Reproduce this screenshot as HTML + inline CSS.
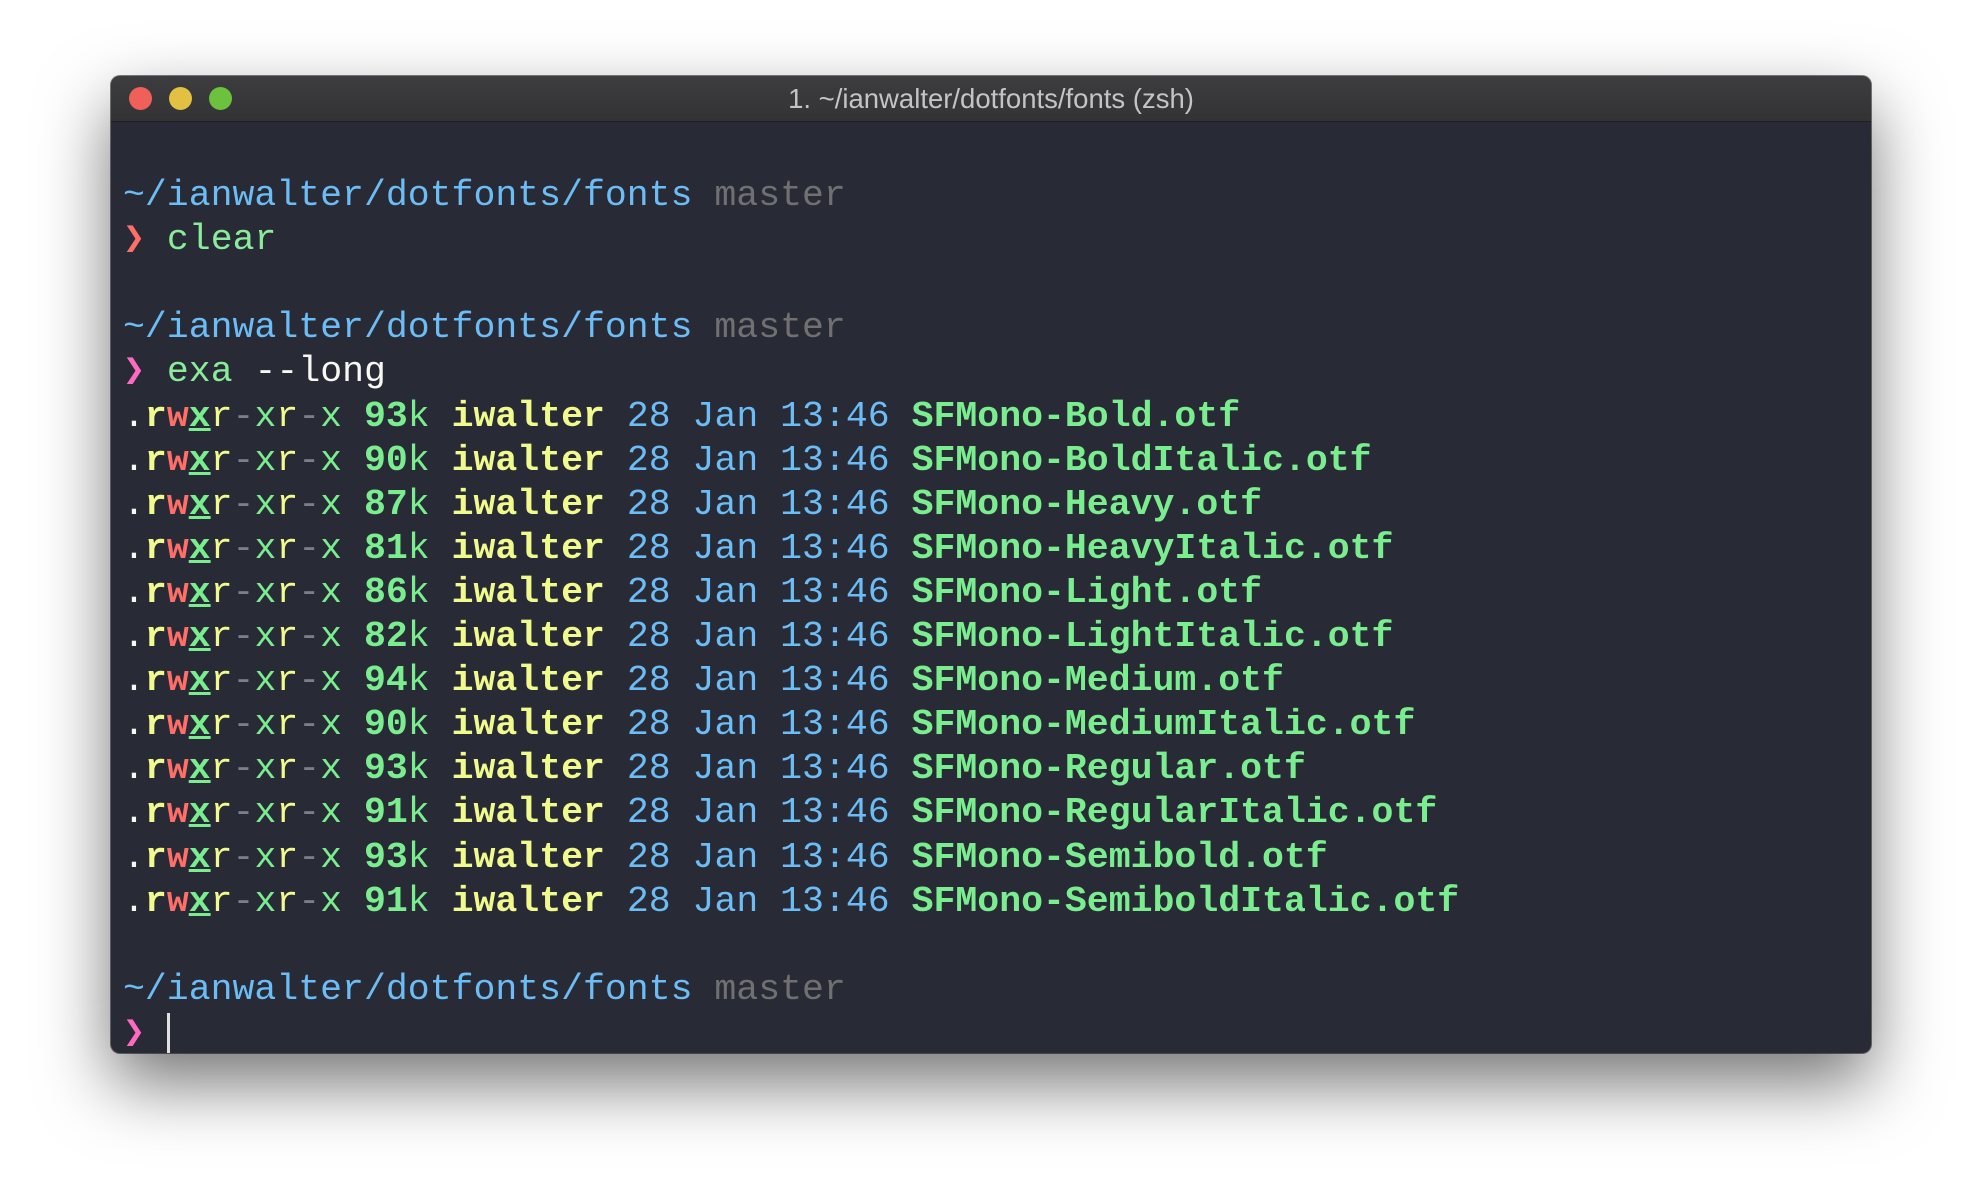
<!DOCTYPE html>
<html><head><meta charset="utf-8"><style>
html,body{margin:0;padding:0;width:1982px;height:1202px;background:#fff;overflow:hidden}
.win{position:absolute;left:111px;top:76px;width:1760px;height:977px;background:#282a36;border-radius:9px;box-shadow:0 30px 70px rgba(0,0,0,.55),0 0 0 1px rgba(0,0,0,.5);overflow:hidden}
.bar{height:45px;background:linear-gradient(#3d3d40,#333336);border-bottom:1px solid #1f1f22;position:relative}
.dot{position:absolute;top:11px;width:23px;height:23px;border-radius:50%}
.title{position:absolute;left:0;right:0;top:7px;line-height:45px;text-align:center;color:#c4c4c4;font:27.5px "Liberation Sans",sans-serif}
.term{position:absolute;left:12px;top:54px;font-family:"Liberation Mono",monospace;font-size:36.5px;line-height:44.1px;white-space:pre;color:#f8f8f2}
.b{color:#6cbdf5}.g{color:#707070}.rd{color:#ff6e67}.gr{color:#8aeb9a}.pk{color:#ff6ac1}
.y{color:#f1fa8c}.w{color:#ff6e67}.x{color:#7aed8f}.d{color:#7a7f8c}.f{color:#7aed8f;font-weight:bold}
.bo{font-weight:bold}.u{text-decoration:underline}
.cur{display:inline-block;width:3px;height:40px;background:#e0e0e0;vertical-align:middle}
</style></head><body>
<div class="win">
<div class="bar">
<div class="dot" style="left:18px;background:#f0605a"></div>
<div class="dot" style="left:58px;background:#e2c041"></div>
<div class="dot" style="left:98px;background:#6cc13e"></div>
<div class="title">1. ~/ianwalter/dotfonts/fonts (zsh)</div>
</div>
<div class="term">
<span class="b">~/ianwalter/dotfonts/fonts</span> <span class="g">master</span>
<span class="rd">❯</span> <span class="gr">clear</span>

<span class="b">~/ianwalter/dotfonts/fonts</span> <span class="g">master</span>
<span class="pk">❯</span> <span class="gr">exa</span> --long
.<span class="y bo">r</span><span class="w bo">w</span><span class="x bo u">x</span><span class="y">r</span><span class="d">-</span><span class="x">x</span><span class="y">r</span><span class="d">-</span><span class="x">x</span> <span class="f">93</span><span class="x">k</span> <span class="y bo">iwalter</span> <span class="b">28 Jan 13:46</span> <span class="f">SFMono-Bold.otf</span>
.<span class="y bo">r</span><span class="w bo">w</span><span class="x bo u">x</span><span class="y">r</span><span class="d">-</span><span class="x">x</span><span class="y">r</span><span class="d">-</span><span class="x">x</span> <span class="f">90</span><span class="x">k</span> <span class="y bo">iwalter</span> <span class="b">28 Jan 13:46</span> <span class="f">SFMono-BoldItalic.otf</span>
.<span class="y bo">r</span><span class="w bo">w</span><span class="x bo u">x</span><span class="y">r</span><span class="d">-</span><span class="x">x</span><span class="y">r</span><span class="d">-</span><span class="x">x</span> <span class="f">87</span><span class="x">k</span> <span class="y bo">iwalter</span> <span class="b">28 Jan 13:46</span> <span class="f">SFMono-Heavy.otf</span>
.<span class="y bo">r</span><span class="w bo">w</span><span class="x bo u">x</span><span class="y">r</span><span class="d">-</span><span class="x">x</span><span class="y">r</span><span class="d">-</span><span class="x">x</span> <span class="f">81</span><span class="x">k</span> <span class="y bo">iwalter</span> <span class="b">28 Jan 13:46</span> <span class="f">SFMono-HeavyItalic.otf</span>
.<span class="y bo">r</span><span class="w bo">w</span><span class="x bo u">x</span><span class="y">r</span><span class="d">-</span><span class="x">x</span><span class="y">r</span><span class="d">-</span><span class="x">x</span> <span class="f">86</span><span class="x">k</span> <span class="y bo">iwalter</span> <span class="b">28 Jan 13:46</span> <span class="f">SFMono-Light.otf</span>
.<span class="y bo">r</span><span class="w bo">w</span><span class="x bo u">x</span><span class="y">r</span><span class="d">-</span><span class="x">x</span><span class="y">r</span><span class="d">-</span><span class="x">x</span> <span class="f">82</span><span class="x">k</span> <span class="y bo">iwalter</span> <span class="b">28 Jan 13:46</span> <span class="f">SFMono-LightItalic.otf</span>
.<span class="y bo">r</span><span class="w bo">w</span><span class="x bo u">x</span><span class="y">r</span><span class="d">-</span><span class="x">x</span><span class="y">r</span><span class="d">-</span><span class="x">x</span> <span class="f">94</span><span class="x">k</span> <span class="y bo">iwalter</span> <span class="b">28 Jan 13:46</span> <span class="f">SFMono-Medium.otf</span>
.<span class="y bo">r</span><span class="w bo">w</span><span class="x bo u">x</span><span class="y">r</span><span class="d">-</span><span class="x">x</span><span class="y">r</span><span class="d">-</span><span class="x">x</span> <span class="f">90</span><span class="x">k</span> <span class="y bo">iwalter</span> <span class="b">28 Jan 13:46</span> <span class="f">SFMono-MediumItalic.otf</span>
.<span class="y bo">r</span><span class="w bo">w</span><span class="x bo u">x</span><span class="y">r</span><span class="d">-</span><span class="x">x</span><span class="y">r</span><span class="d">-</span><span class="x">x</span> <span class="f">93</span><span class="x">k</span> <span class="y bo">iwalter</span> <span class="b">28 Jan 13:46</span> <span class="f">SFMono-Regular.otf</span>
.<span class="y bo">r</span><span class="w bo">w</span><span class="x bo u">x</span><span class="y">r</span><span class="d">-</span><span class="x">x</span><span class="y">r</span><span class="d">-</span><span class="x">x</span> <span class="f">91</span><span class="x">k</span> <span class="y bo">iwalter</span> <span class="b">28 Jan 13:46</span> <span class="f">SFMono-RegularItalic.otf</span>
.<span class="y bo">r</span><span class="w bo">w</span><span class="x bo u">x</span><span class="y">r</span><span class="d">-</span><span class="x">x</span><span class="y">r</span><span class="d">-</span><span class="x">x</span> <span class="f">93</span><span class="x">k</span> <span class="y bo">iwalter</span> <span class="b">28 Jan 13:46</span> <span class="f">SFMono-Semibold.otf</span>
.<span class="y bo">r</span><span class="w bo">w</span><span class="x bo u">x</span><span class="y">r</span><span class="d">-</span><span class="x">x</span><span class="y">r</span><span class="d">-</span><span class="x">x</span> <span class="f">91</span><span class="x">k</span> <span class="y bo">iwalter</span> <span class="b">28 Jan 13:46</span> <span class="f">SFMono-SemiboldItalic.otf</span>

<span class="b">~/ianwalter/dotfonts/fonts</span> <span class="g">master</span>
<span class="pk">❯</span> <span class="cur"></span>
</div>
</div>
</body></html>
